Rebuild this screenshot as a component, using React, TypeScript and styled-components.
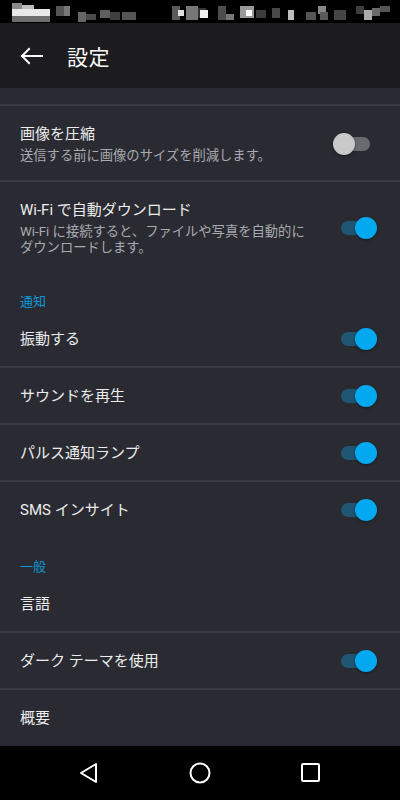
import React from "react";
import styled, { createGlobalStyle } from "styled-components";

const GlobalStyle = createGlobalStyle`
  html, body {
    margin: 0;
    padding: 0;
    background: #000;
  }
  body {
    font-family: Roboto, "Noto Sans CJK JP", "Noto Sans", sans-serif;
    -webkit-font-smoothing: antialiased;
  }
`;

const Screen = styled.div`
  width: 400px;
  height: 800px;
  display: flex;
  flex-direction: column;
  background: #2a2b32;
  overflow: hidden;
`;

const StatusBar = styled.div`
  height: 23px;
  background: #000;
  flex-shrink: 0;
  svg {
    display: block;
  }
`;

const Toolbar = styled.div`
  height: 65px;
  background: #1c1c1f;
  display: flex;
  align-items: center;
  padding: 0 20px 0 19px;
  gap: 24px;
  flex-shrink: 0;
`;

const Title = styled.h1`
  margin: 0;
  color: #fafafa;
  font-size: 21px;
  font-weight: 400;
  letter-spacing: 0.5px;
`;

const List = styled.div`
  flex: 1;
  display: flex;
  flex-direction: column;
  padding-top: 16px;
`;

const Divider = styled.div`
  height: 2px;
  background: #3a3b42;
  flex-shrink: 0;
`;

const Row = styled.div<{ $tall?: boolean }>`
  display: flex;
  align-items: center;
  justify-content: space-between;
  padding: ${(p) => (p.$tall ? "17px 30px 16px 20px" : "0 30px 0 20px")};
  height: ${(p) => (p.$tall ? "auto" : "55px")};
  flex-shrink: 0;
`;

const Texts = styled.div`
  display: flex;
  flex-direction: column;
  max-width: 290px;
`;

const RowTitle = styled.div`
  color: #ececec;
  font-size: 15px;
  line-height: 22px;
`;

const RowSub = styled.div`
  color: #a9aab0;
  font-size: 13.3px;
  line-height: 16px;
  margin-top: 3px;
`;

const SectionHeader = styled.div`
  color: #0a98d6;
  font-size: 13px;
  height: 39px;
  display: flex;
  align-items: flex-end;
  padding: 0 20px 1px;
  box-sizing: border-box;
  flex-shrink: 0;
`;

const Track = styled.div<{ $on: boolean }>`
  position: relative;
  width: 29px;
  height: 14px;
  border-radius: 7px;
  background: ${(p) => (p.$on ? "#1f5672" : "#6a6b71")};
  margin-left: 12px;
  flex-shrink: 0;
`;

const Thumb = styled.div<{ $on: boolean }>`
  position: absolute;
  top: -4px;
  left: ${(p) => (p.$on ? "14px" : "-8px")};
  width: 22px;
  height: 22px;
  border-radius: 50%;
  background: ${(p) => (p.$on ? "#03a9f0" : "#c9c9c9")};
  box-shadow: 0 1px 3px rgba(0, 0, 0, 0.45);
`;

const NavBar = styled.div`
  height: 54px;
  background: #000;
  display: grid;
  grid-template-columns: repeat(3, 111px);
  justify-content: center;
  justify-items: center;
  align-items: center;
  flex-shrink: 0;
  svg {
    display: block;
  }
`;

const Toggle = ({ on }: { on: boolean }) => (
  <Track $on={on}>
    <Thumb $on={on} />
  </Track>
);

const Item = ({
  title,
  sub,
  toggle,
}: {
  title: string;
  sub?: string;
  toggle?: boolean;
}) => (
  <Row $tall={!!sub}>
    <Texts>
      <RowTitle>{title}</RowTitle>
      {sub && <RowSub>{sub}</RowSub>}
    </Texts>
    {toggle !== undefined && <Toggle on={toggle} />}
  </Row>
);

// blurred status bar: blocky gray pixels
const blocks: [number, number, number, number, string][] = [
  [12, 3, 10, 6, "#8a8a8a"],
  [12, 9, 38, 7, "#e8e8e8"],
  [22, 5, 12, 4, "#bdbdbd"],
  [12, 16, 38, 6, "#6e6e6e"],
  [56, 6, 8, 10, "#555"],
  [64, 6, 6, 10, "#777"],
  [78, 12, 8, 10, "#666"],
  [86, 14, 10, 6, "#4a4a4a"],
  [100, 10, 10, 8, "#5e5e5e"],
  [110, 12, 10, 8, "#3f3f3f"],
  [122, 12, 14, 8, "#555"],
  [172, 6, 8, 14, "#5a5a5a"],
  [178, 10, 6, 6, "#e0e0e0"],
  [186, 6, 12, 14, "#777"],
  [198, 8, 8, 10, "#333"],
  [200, 10, 8, 8, "#f0f0f0"],
  [218, 6, 8, 14, "#4d4d4d"],
  [226, 14, 8, 6, "#777"],
  [240, 6, 14, 12, "#999"],
  [246, 10, 6, 6, "#ffffff"],
  [256, 10, 10, 8, "#3c3c3c"],
  [272, 8, 8, 10, "#484848"],
  [288, 10, 6, 10, "#bdbdbd"],
  [306, 12, 10, 8, "#555"],
  [318, 6, 8, 8, "#888"],
  [320, 12, 8, 8, "#5a5a5a"],
  [334, 10, 12, 10, "#444"],
  [356, 6, 8, 8, "#3d3d3d"],
  [364, 10, 8, 10, "#aaa"],
  [372, 8, 8, 8, "#6a6a6a"],
  [380, 6, 10, 6, "#555"],
];

const StatusPixels = () => (
  <svg width="400" height="23" viewBox="0 0 400 23">
    {blocks.map(([x, y, w, h, c], i) => (
      <rect key={i} x={x} y={y} width={w} height={h} fill={c} />
    ))}
  </svg>
);

const BackArrow = () => (
  <svg width="24" height="24" viewBox="0 0 24 24" fill="none">
    <path
      d="M23 12H3M10 5l-7 7 7 7"
      stroke="#fafafa"
      strokeWidth="2"
      strokeLinecap="square"
    />
  </svg>
);

const NavBack = () => (
  <svg width="22" height="24" viewBox="0 0 22 24" fill="none">
    <path d="M18 3v18L3 12z" stroke="#fff" strokeWidth="2" strokeLinejoin="round" />
  </svg>
);

const NavHome = () => (
  <svg width="24" height="24" viewBox="0 0 24 24" fill="none">
    <circle cx="12" cy="12" r="9.5" stroke="#fff" strokeWidth="2" />
  </svg>
);

const NavRecent = () => (
  <svg width="22" height="22" viewBox="0 0 22 22" fill="none">
    <rect x="2" y="2" width="17" height="17" rx="1" stroke="#fff" strokeWidth="2" />
  </svg>
);

export default function App() {
  return (
    <>
      <GlobalStyle />
      <Screen>
        <StatusBar>
          <StatusPixels />
        </StatusBar>
        <Toolbar>
          <BackArrow />
          <Title>設定</Title>
        </Toolbar>
        <List>
          <Divider />
          <Item
            title="画像を圧縮"
            sub="送信する前に画像のサイズを削減します。"
            toggle={false}
          />
          <Divider />
          <Item
            title="Wi-Fi で自動ダウンロード"
            sub="Wi-Fi に接続すると、ファイルや写真を自動的にダウンロードします。"
            toggle={true}
          />
          <SectionHeader>通知</SectionHeader>
          <Item title="振動する" toggle={true} />
          <Divider />
          <Item title="サウンドを再生" toggle={true} />
          <Divider />
          <Item title="パルス通知ランプ" toggle={true} />
          <Divider />
          <Item title="SMS インサイト" toggle={true} />
          <SectionHeader>一般</SectionHeader>
          <Item title="言語" />
          <Divider />
          <Item title="ダーク テーマを使用" toggle={true} />
          <Divider />
          <Item title="概要" />
        </List>
        <NavBar>
          <NavBack />
          <NavHome />
          <NavRecent />
        </NavBar>
      </Screen>
    </>
  );
}
